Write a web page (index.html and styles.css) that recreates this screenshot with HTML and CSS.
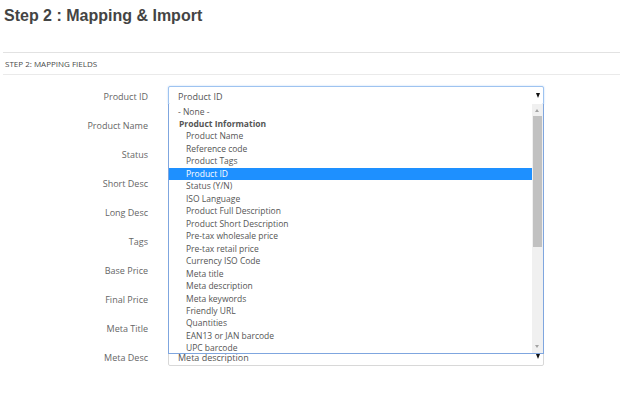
FILE: index.html
```html
<!DOCTYPE html>
<html>
<head>
<meta charset="utf-8">
<link rel="stylesheet" href="styles.css">
</head>
<body>
<div class="page">
  <h1 class="title">Step 2 : Mapping &amp; Import</h1>
  <div class="panel">
    <div class="panel-head">STEP 2: MAPPING FIELDS</div>
    <div class="form">
      <div class="row"><div class="label">Product ID</div><div class="select focus"><span>Product ID</span><i class="arrow"></i></div></div>
      <div class="row"><div class="label">Product Name</div><div class="select"><span>Product Name</span><i class="arrow"></i></div></div>
      <div class="row"><div class="label">Status</div><div class="select"><span>Status (Y/N)</span><i class="arrow"></i></div></div>
      <div class="row"><div class="label">Short Desc</div><div class="select"><span>Product Short Description</span><i class="arrow"></i></div></div>
      <div class="row"><div class="label">Long Desc</div><div class="select"><span>Product Full Description</span><i class="arrow"></i></div></div>
      <div class="row"><div class="label">Tags</div><div class="select"><span>Product Tags</span><i class="arrow"></i></div></div>
      <div class="row"><div class="label">Base Price</div><div class="select"><span>Pre-tax wholesale price</span><i class="arrow"></i></div></div>
      <div class="row"><div class="label">Final Price</div><div class="select"><span>Pre-tax retail price</span><i class="arrow"></i></div></div>
      <div class="row"><div class="label">Meta Title</div><div class="select"><span>Meta title</span><i class="arrow"></i></div></div>
      <div class="row"><div class="label">Meta Desc</div><div class="select"><span>Meta description</span><i class="arrow"></i></div></div>
    </div>
  </div>
  <div class="dropdown">
    <div class="options">
      <div class="opt top">- None -</div>
      <div class="opt group">Product Information</div>
      <div class="opt sub">Product Name</div>
      <div class="opt sub">Reference code</div>
      <div class="opt sub">Product Tags</div>
      <div class="opt sub selected">Product ID</div>
      <div class="opt sub">Status (Y/N)</div>
      <div class="opt sub">ISO Language</div>
      <div class="opt sub">Product Full Description</div>
      <div class="opt sub">Product Short Description</div>
      <div class="opt sub">Pre-tax wholesale price</div>
      <div class="opt sub">Pre-tax retail price</div>
      <div class="opt sub">Currency ISO Code</div>
      <div class="opt sub">Meta title</div>
      <div class="opt sub">Meta description</div>
      <div class="opt sub">Meta keywords</div>
      <div class="opt sub">Friendly URL</div>
      <div class="opt sub">Quantities</div>
      <div class="opt sub">EAN13 or JAN barcode</div>
      <div class="opt sub">UPC barcode</div>
    </div>
    <div class="scrollbar">
      <div class="sb-up"></div>
      <div class="sb-thumb"></div>
      <div class="sb-track"></div>
      <div class="sb-down"></div>
    </div>
  </div>
</div>
</body>
</html>
```
FILE: styles.css
```css
html, body {
  margin: 0;
  padding: 0;
  background: #fff;
}
.page {
  position: relative;
  padding: 0 2px 0 3px;
  font-family: "Open Sans", "Liberation Sans", sans-serif;
}
.title {
  margin: 0;
  padding: 6px 0 0 1px;
  font-family: "Liberation Sans", Arial, sans-serif;
  font-size: 16px;
  line-height: 20px;
  font-weight: bold;
  color: #444;
}
.panel {
  margin-top: 26px;
  border-top: 1px solid #e2e2e2;
}
.panel-head {
  height: 21px;
  line-height: 21px;
  padding-left: 2px;
  font-size: 8px;
  color: #4a4a4a;
  border-bottom: 1px solid #eaeaea;
}
.form {
  padding-top: 11px;
  display: flex;
  flex-direction: column;
  gap: 10px;
}
.row {
  display: flex;
  align-items: center;
  gap: 20px;
  height: 19px;
}
.label {
  width: 145px;
  text-align: right;
  font-size: 9px;
  line-height: 19px;
  padding-top: 2px;
  color: #666;
}
.select {
  position: relative;
  box-sizing: border-box;
  width: 376px;
  height: 19px;
  border: 1px solid #d8d8d8;
  border-radius: 2px;
  padding: 1px 0 0 9px;
  font-size: 9px;
  line-height: 17px;
  color: #555;
  background: #fff;
}
.select.focus {
  border-color: #9ec3f0;
  box-shadow: 0 0 2px #b8d4f6;
}
.arrow {
  position: absolute;
  right: 3px;
  top: 6px;
  width: 0;
  height: 0;
  border-left: 2.5px solid transparent;
  border-right: 2.5px solid transparent;
  border-top: 5px solid #111;
}
.dropdown {
  position: absolute;
  left: 168px;
  top: 104px;
  box-sizing: border-box;
  width: 376px;
  height: 250px;
  border: 1px solid #7fa6df;
  border-top: none;
  background: #fff;
  display: flex;
}
.options {
  flex: 1;
  padding-top: 1.5px;
}
.opt {
  height: 12.47px;
  line-height: 12.47px;
  font-size: 8.5px;
  color: #555;
  white-space: nowrap;
}
.opt.top { padding-left: 9px; }
.opt.group { padding-left: 10px; font-weight: bold; }
.opt.sub { padding-left: 17px; }
.opt.selected {
  background: #1e90ff;
  color: #fff;
}
.scrollbar {
  width: 11px;
  background: #f0f0f0;
  display: flex;
  flex-direction: column;
  align-items: center;
}
.sb-up, .sb-down {
  height: 12px;
  width: 100%;
  position: relative;
}
.sb-up::after, .sb-down::after {
  content: "";
  position: absolute;
  left: 3px;
  width: 0;
  height: 0;
  border-left: 2.5px solid transparent;
  border-right: 2.5px solid transparent;
}
.sb-up::after { top: 5px; border-bottom: 3px solid #a3a3a3; }
.sb-down::after { top: 4px; border-top: 3px solid #a3a3a3; }
.sb-thumb {
  width: 9px;
  height: 131px;
  background: #c1c1c1;
}
.sb-track { flex: 1; }
```
